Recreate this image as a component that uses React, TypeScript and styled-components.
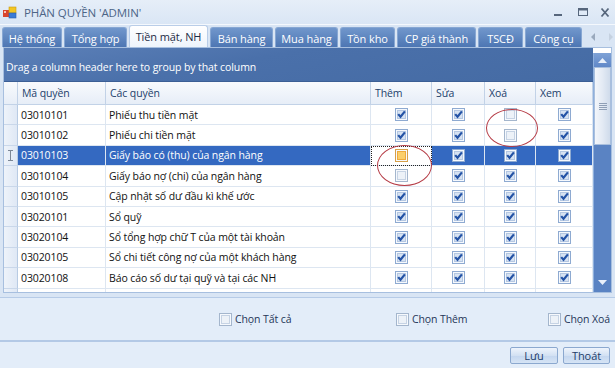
import React from 'react';
import styled, { createGlobalStyle } from 'styled-components';

type Mark = 'on' | 'off' | 'hot';

const GlobalStyle = createGlobalStyle`
  html, body {
    margin: 0;
    padding: 0;
  }
  body {
    width: 615px;
    height: 368px;
    overflow: hidden;
    font-family: 'Open Sans', 'Liberation Sans', sans-serif;
    font-size: 10.5px;
    letter-spacing: -0.1px;
  }
`;

const tabs = [
  { label: 'Hệ thống', width: 60 },
  { label: 'Tổng hợp', width: 63 },
  { label: 'Tiền mặt, NH', width: 79, active: true },
  { label: 'Bán hàng', width: 63 },
  { label: 'Mua hàng', width: 63 },
  { label: 'Tồn kho', width: 55 },
  { label: 'CP giá thành', width: 79 },
  { label: 'TSCĐ', width: 45 },
  { label: 'Công cụ', width: 57 },
];

const headers = ['Mã quyền', 'Các quyền', 'Thêm', 'Sửa', 'Xoá', 'Xem'];

const rows: { code: string; name: string; marks: Mark[]; selected?: boolean }[] = [
  { code: '03010101', name: 'Phiếu thu tiền mặt', marks: ['on', 'on', 'off', 'on'] },
  { code: '03010102', name: 'Phiếu chi tiền mặt', marks: ['on', 'on', 'off', 'on'] },
  { code: '03010103', name: 'Giấy báo có (thu) của ngân hàng', marks: ['hot', 'on', 'on', 'on'], selected: true },
  { code: '03010104', name: 'Giấy báo nợ (chi) của ngân hàng', marks: ['off', 'on', 'on', 'on'] },
  { code: '03010105', name: 'Cập nhật số dư đầu kì khế ước', marks: ['on', 'on', 'on', 'on'] },
  { code: '03020101', name: 'Sổ quỹ', marks: ['on', 'on', 'on', 'on'] },
  { code: '03020104', name: 'Sổ tổng hợp chữ T của một tài khoản', marks: ['on', 'on', 'on', 'on'] },
  { code: '03020105', name: 'Sổ chi tiết công nợ của một khách hàng', marks: ['on', 'on', 'on', 'on'] },
  { code: '03020108', name: 'Báo cáo số dư tại quỹ và tại các NH', marks: ['on', 'on', 'on', 'on'] },
  // dòng bị cắt ở cuối lưới: chỉ thấy đường kẻ
  { code: '', name: '', marks: [] },
];

// độ rộng các cột: chỉ báo dòng + 6 cột dữ liệu
const COLS = '14px 88px 265px 61px 53px 51px 57px';

function CheckMark({ state = 'on' }: { state?: Mark }) {
  const frame = state === 'hot' ? '#d6a04a' : state === 'on' ? '#8eaad1' : '#a4b6cd';
  const fill = state === 'hot' ? '#fbcf6a' : state === 'on' ? '#d6e2f2' : '#edf2f8';
  const inner = state === 'hot' ? '#eeaa3c' : state === 'on' ? '#b4c7e2' : '#c6d3e4';
  return (
    <svg width="13" height="13" viewBox="0 0 13 13">
      <rect x="0.5" y="0.5" width="12" height="12" fill="#f6f9fd" stroke={frame} />
      <rect x="2.5" y="2.5" width="8" height="8" fill={fill} stroke={inner} />
      {state === 'on' && (
        <path d="M3.2 6.1 L5.5 8.8 L9.9 3.4" fill="none" stroke="#2453a6" strokeWidth="2.2" />
      )}
    </svg>
  );
}

function AppIcon() {
  return (
    <svg width="14" height="13" viewBox="0 0 14 13">
      <rect x="0" y="4" width="6" height="7" fill="#d9452e" />
      <rect x="1" y="5" width="2" height="2" fill="#f6c3b8" />
      <rect x="6" y="1" width="7" height="6" fill="#f3c623" stroke="#c99a12" strokeWidth="0.6" />
      <rect x="6" y="7" width="7" height="5" fill="#3b7bd6" stroke="#2a5ea8" strokeWidth="0.6" />
    </svg>
  );
}

function WindowButtons() {
  return (
    <svg width="56" height="14" viewBox="0 0 56 14">
      <rect x="0" y="9" width="8" height="2" fill="#56667c" />
      <rect x="24.5" y="3.5" width="9" height="7" fill="none" stroke="#56667c" />
      <rect x="24" y="3" width="10" height="2.5" fill="#56667c" />
      <path d="M47.5 3.5 L54.5 11.5 M54.5 3.5 L47.5 11.5" stroke="#56667c" strokeWidth="1.8" />
    </svg>
  );
}

function TabArrows() {
  return (
    <svg width="22" height="10" viewBox="0 0 22 10">
      <path d="M4 1 L0 5 L4 9 Z" fill="#9aa9bd" />
      <path d="M18 1 L22 5 L18 9 Z" fill="#c5d1e0" />
    </svg>
  );
}

function IBeam() {
  return (
    <svg width="5" height="11" viewBox="0 0 5 11">
      <path d="M0 0.5 H5 M0 10.5 H5 M2.5 0.5 V10.5" stroke="#7c8796" strokeWidth="1" fill="none" />
    </svg>
  );
}

function Arrow({ up }: { up?: boolean }) {
  return (
    <svg width="9" height="5" viewBox="0 0 9 5">
      <path d={up ? 'M0 5 L4.5 0 L9 5 Z' : 'M0 0 L4.5 5 L9 0 Z'} fill="#e9f0fa" />
    </svg>
  );
}

export default function App() {
  return (
    <Window>
      <GlobalStyle />
      <TitleBar>
        <AppIcon />
        <Title>PHÂN QUYỀN 'ADMIN'</Title>
        <Controls>
          <WindowButtons />
        </Controls>
      </TitleBar>

      <TabStrip>
        {tabs.map(t => (
          <Tab key={t.label} $w={t.width} $active={!!t.active}>
            {t.label}
          </Tab>
        ))}
        <ArrowBox>
          <TabArrows />
        </ArrowBox>
      </TabStrip>

      <GridFrame>
        <GridMain>
          <GroupPanel>Drag a column header here to group by that column</GroupPanel>
          <HeaderRow>
            <HeaderIndicator />
            {headers.map(h => (
              <HeaderCell key={h}>{h}</HeaderCell>
            ))}
          </HeaderRow>
          <Rows>
            {rows.map((r, n) => (
              <Row key={n} $selected={!!r.selected}>
                <Indicator>{r.selected && <IBeam />}</Indicator>
                <TextCell>{r.code}</TextCell>
                <TextCell>{r.name}</TextCell>
                {[0, 1, 2, 3].map(i => (
                  <CheckCell key={i} $focused={!!r.selected && i === 0}>
                    {r.marks[i] && <CheckMark state={r.marks[i]} />}
                  </CheckCell>
                ))}
              </Row>
            ))}
          </Rows>
        </GridMain>

        <ScrollBar>
          <ScrollButton>
            <Arrow up />
          </ScrollButton>
          <Thumb>
            <Grip />
          </Thumb>
          <Track>
            <Arrow />
          </Track>
        </ScrollBar>

        {/* vòng đỏ đánh dấu trên ảnh chụp */}
        <Circle $x={482} $y={61} $w={52} $h={38} />
        <Circle $x={373} $y={97} $w={55} $h={41} />
      </GridFrame>

      <OptionsBar>
        <Option>
          <CheckMark state="off" />
          Chọn Tất cả
        </Option>
        <Option>
          <CheckMark state="off" />
          Chọn Thêm
        </Option>
        <Option>
          <CheckMark state="off" />
          Chọn Xoá
        </Option>
      </OptionsBar>

      <ButtonBar>
        <Button $w={48}>Lưu</Button>
        <Button $w={47}>Thoát</Button>
      </ButtonBar>
    </Window>
  );
}

const Window = styled.div`
  display: flex;
  flex-direction: column;
  width: 615px;
  height: 368px;
  background: #d9e5f4;
  overflow: hidden;
`;

const TitleBar = styled.div`
  display: flex;
  align-items: center;
  height: 25px;
  padding: 0 5px 0 3px;
  box-sizing: border-box;
  background: linear-gradient(to bottom, #e6eef8, #dae6f5);
  border-bottom: 1px solid #f4f8fd;
`;

const Title = styled.div`
  margin-left: 7px;
  color: #4d6587;
  font-size: 11.5px;
  letter-spacing: -0.1px;
`;

const Controls = styled.div`
  display: flex;
  margin-left: auto;
`;

const TabStrip = styled.div`
  display: flex;
  align-items: flex-end;
  gap: 2px;
  height: 22px;
  padding-left: 2px;
`;

const Tab = styled.div<{ $w: number; $active: boolean }>`
  display: flex;
  align-items: center;
  justify-content: center;
  width: ${p => p.$w}px;
  height: ${p => (p.$active ? 22 : 20)}px;
  box-sizing: border-box;
  border: 1px solid ${p => (p.$active ? '#b9cde8' : '#87a7d3')};
  border-bottom: none;
  border-radius: 3px 3px 0 0;
  background: ${p =>
    p.$active
      ? 'linear-gradient(to bottom, #ffffff, #eef4fc)'
      : 'linear-gradient(to bottom, #7197cc, #4d76b3)'};
  color: ${p => (p.$active ? '#1c2c45' : '#ffffff')};
  font-size: 11px;
  padding-top: ${p => (p.$active ? 0 : 1)}px;
  white-space: nowrap;
`;

const ArrowBox = styled.div`
  display: flex;
  align-self: center;
  margin-left: 7px;
  padding-top: 2px;
`;

const GridFrame = styled.div`
  position: relative;
  display: flex;
  height: 246px;
  margin: 0 3px;
  box-sizing: border-box;
  border: 1px solid #a7bfdf;
  background: #ffffff;
`;

const GridMain = styled.div`
  display: flex;
  flex-direction: column;
  width: 589px;
`;

const GroupPanel = styled.div`
  height: 34px;
  box-sizing: border-box;
  padding: 12px 0 0 2px;
  color: #ffffff;
  background: linear-gradient(170deg, #5c80b8 0%, #4a70aa 40%, #456ba4 100%);
  border-bottom: 1px solid #3c5f95;
`;

const HeaderRow = styled.div`
  display: grid;
  grid-template-columns: ${COLS};
  height: 23px;
  background: linear-gradient(to bottom, #f8fafd, #e6edf7);
`;

const HeaderIndicator = styled.div`
  border-right: 1px solid #c2d2e7;
  border-bottom: 1px solid #c2d2e7;
`;

const HeaderCell = styled.div`
  display: flex;
  align-items: center;
  padding-left: 4px;
  border-right: 1px solid #c2d2e7;
  border-bottom: 1px solid #c2d2e7;
  color: #23416b;
`;

const Rows = styled.div`
  flex: 1;
  overflow: hidden;
`;

const Row = styled.div<{ $selected: boolean }>`
  display: grid;
  grid-template-columns: ${COLS};
  height: 20.4px;
  background: ${p => (p.$selected ? '#3469c1' : '#ffffff')};
  color: ${p => (p.$selected ? '#ffffff' : '#111111')};
`;

const Indicator = styled.div`
  display: flex;
  align-items: center;
  justify-content: center;
  background: linear-gradient(to right, #eef3fa, #dfe8f5);
  border-right: 1px solid #b8cbe3;
  border-bottom: 1px solid #c9d7ea;
`;

const TextCell = styled.div`
  display: flex;
  align-items: center;
  padding-left: 3px;
  border-right: 1px solid #dde6f1;
  border-bottom: 1px solid #dde6f1;
  white-space: nowrap;
  overflow: hidden;
`;

const CheckCell = styled.div<{ $focused: boolean }>`
  display: flex;
  align-items: center;
  justify-content: center;
  border-right: 1px solid #dde6f1;
  border-bottom: 1px solid #dde6f1;
  ${p =>
    p.$focused &&
    `
    background: #ffffff;
    outline: 1px dotted #222222;
    outline-offset: -1px;
  `}
`;

const ScrollBar = styled.div`
  display: flex;
  flex-direction: column;
  width: 17px;
  margin-top: 5px;
  background: #5a83c3;
  border-left: 1px solid #8fb0dd;
`;

const ScrollButton = styled.div`
  display: flex;
  align-items: center;
  justify-content: center;
  height: 14px;
  background: linear-gradient(to bottom, #7fa2d6, #6088c8);
`;

const Thumb = styled.div`
  display: flex;
  align-items: center;
  justify-content: center;
  height: 78px;
  box-sizing: border-box;
  border: 1px solid #a9bfdd;
  background: linear-gradient(to right, #f3f6fb, #e3eaf4 50%, #cfdbeb);
`;

const Grip = styled.div`
  width: 8px;
  height: 7px;
  background: repeating-linear-gradient(to bottom, #8f9fb6 0 1px, transparent 1px 2px);
`;

const Track = styled.div`
  display: flex;
  flex: 1;
  align-items: flex-end;
  justify-content: center;
  padding-bottom: 7px;
`;

const Circle = styled.div<{ $x: number; $y: number; $w: number; $h: number }>`
  position: absolute;
  left: ${p => p.$x}px;
  top: ${p => p.$y}px;
  width: ${p => p.$w}px;
  height: ${p => p.$h}px;
  box-sizing: border-box;
  border: 1px solid #b53a44;
  border-radius: 50%;
  pointer-events: none;
`;

const OptionsBar = styled.div`
  display: grid;
  grid-template-columns: 177px 152px auto;
  align-items: center;
  height: 42px;
  margin-top: 4px;
  padding-left: 219px;
  border-top: 1px solid #b6cbe7;
  background: #e3edf9;
`;

const Option = styled.label`
  display: flex;
  align-items: center;
  gap: 3px;
  color: #1f3658;
  white-space: nowrap;
`;

const ButtonBar = styled.div`
  display: flex;
  flex: 1;
  align-items: center;
  justify-content: flex-end;
  gap: 5px;
  padding-right: 5px;
  border-top: 2px solid #b3c9e6;
  background: #e3edf9;
`;

const Button = styled.button<{ $w: number }>`
  width: ${p => p.$w}px;
  height: 17px;
  padding: 0;
  border: 1px solid #8ba8cf;
  border-radius: 2px;
  background: linear-gradient(to bottom, #eef4fc, #d3e1f3 50%, #c3d6ef 51%, #d6e4f5);
  color: #1d3c69;
  font-family: inherit;
  font-size: 11px;
  letter-spacing: -0.1px;
`;
